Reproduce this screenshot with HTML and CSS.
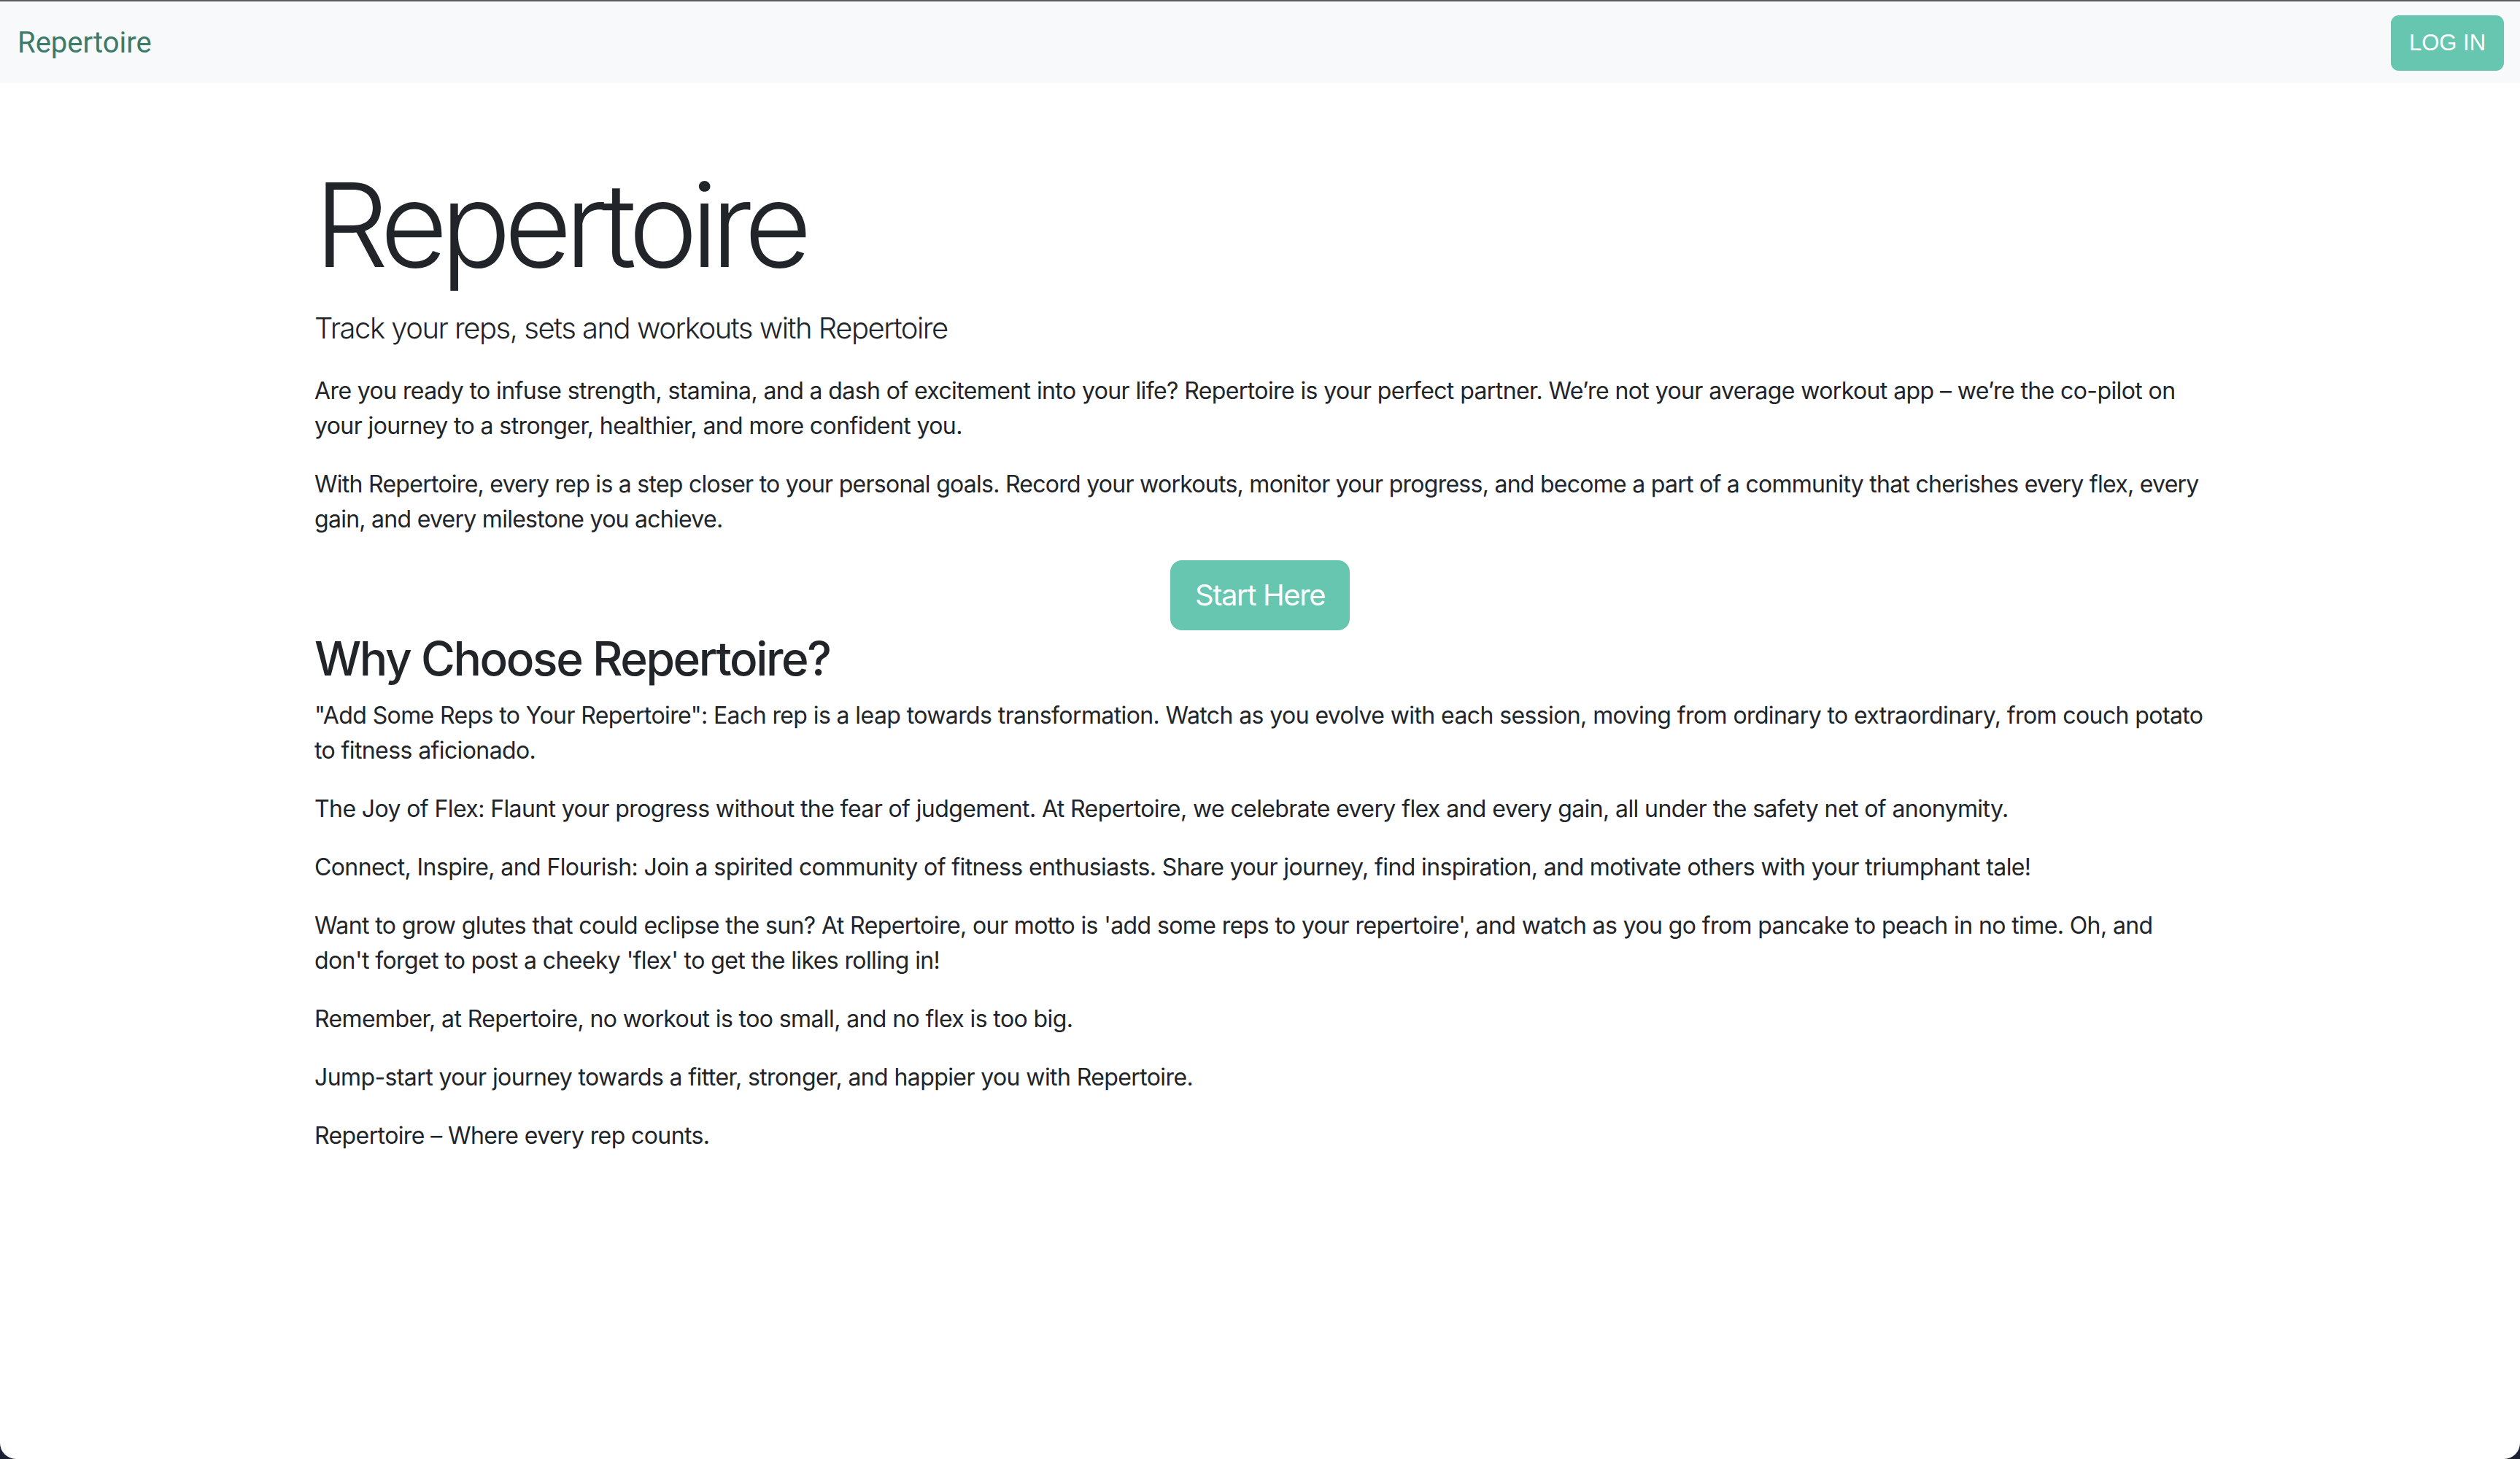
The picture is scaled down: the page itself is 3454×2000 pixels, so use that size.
FILE: index.html
```html
<!DOCTYPE html>
<html lang="en">
<head>
<meta charset="utf-8">
<title>Repertoire</title>
<link rel="stylesheet" href="styles.css">
</head>
<body>
<div class="window">
  <div class="frame-top"></div>
  <nav class="navbar">
    <a class="brand" href="#">Repertoire</a>
    <button class="login">LOG IN</button>
  </nav>
  <main class="container">
    <h1 class="display">Repertoire</h1>
    <p class="lead">Track your reps, sets and workouts with Repertoire</p>
    <p>Are you ready to infuse strength, stamina, and a dash of excitement into your life? Repertoire is your perfect partner. We’re not your average workout app – we’re the co-pilot on your journey to a stronger, healthier, and more confident you.</p>
    <p class="tight">With Repertoire, every rep is a step closer to your personal goals. Record your workouts, monitor your progress, and become a part of a community that cherishes every flex, every gain, and every milestone you achieve.</p>
    <div class="cta"><button class="start">Start Here</button></div>
    <h2>Why Choose Repertoire?</h2>
    <p>"Add Some Reps to Your Repertoire": Each rep is a leap towards transformation. Watch as you evolve with each session, moving from ordinary to extraordinary, from couch potato to fitness aficionado.</p>
    <p>The Joy of Flex: Flaunt your progress without the fear of judgement. At Repertoire, we celebrate every flex and every gain, all under the safety net of anonymity.</p>
    <p>Connect, Inspire, and Flourish: Join a spirited community of fitness enthusiasts. Share your journey, find inspiration, and motivate others with your triumphant tale!</p>
    <p>Want to grow glutes that could eclipse the sun? At Repertoire, our motto is 'add some reps to your repertoire', and watch as you go from pancake to peach in no time. Oh, and don't forget to post a cheeky 'flex' to get the likes rolling in!</p>
    <p>Remember, at Repertoire, no workout is too small, and no flex is too big.</p>
    <p>Jump-start your journey towards a fitter, stronger, and happier you with Repertoire.</p>
    <p>Repertoire – Where every rep counts.</p>
  </main>
</div>
</body>
</html>
```
FILE: styles.css
```css
* { box-sizing: border-box; }
html, body {
  margin: 0;
  padding: 0;
  background: #1b2231;
}
body {
  font-family: Inter, "Noto Sans", sans-serif;
  font-size: 32px;
  line-height: 48px;
  letter-spacing: -0.6px;
  color: #212529;
}
.window {
  background: #ffffff;
  height: 2000px;
  border-radius: 0 0 22px 22px;
  overflow: hidden;
}
.frame-top {
  height: 2px;
  background: #5c5c5e;
}
.navbar {
  height: 112px;
  background: #f8f9fa;
  display: flex;
  align-items: center;
  justify-content: space-between;
  padding: 0 22px 0 24px;
}
.brand {
  font-family: Roboto, "Noto Sans", sans-serif;
  font-size: 40px;
  letter-spacing: 0;
  color: #3c7a69;
  text-decoration: none;
  line-height: 60px;
  margin-top: 2px;
}
.login {
  font-family: "Liberation Sans", Arial, sans-serif;
  font-size: 31px;
  letter-spacing: 0;
  color: #ffffff;
  background: #66c6b0;
  border: 0;
  border-radius: 11px;
  width: 155px;
  height: 76px;
  padding: 0;
  margin-top: 2px;
}
.container {
  width: 2640px;
  margin: 0 auto;
  padding: 98px 24px 0;
}
.display {
  font-size: 160px;
  font-weight: 300;
  line-height: 192px;
  margin: 0 0 16px;
  letter-spacing: -9.5px;
}
.lead {
  font-size: 40px;
  font-weight: 300;
  line-height: 60px;
  letter-spacing: -1.5px;
  margin: 0 0 32px;
}
p {
  margin: 0 0 32px;
}
p.tight {
  letter-spacing: -0.73px;
}
.cta {
  display: flex;
  justify-content: center;
}
.start {
  font-family: Inter, "Noto Sans", sans-serif;
  font-size: 40px;
  line-height: 60px;
  letter-spacing: -1.4px;
  color: #ffffff;
  background: #66c6b0;
  border: 2px solid #66c6b0;
  border-radius: 16px;
  padding: 16px 32px;
}
h2 {
  font-size: 64px;
  font-weight: 500;
  line-height: 77px;
  letter-spacing: -2.4px;
  margin: 0 0 16px;
}
```
